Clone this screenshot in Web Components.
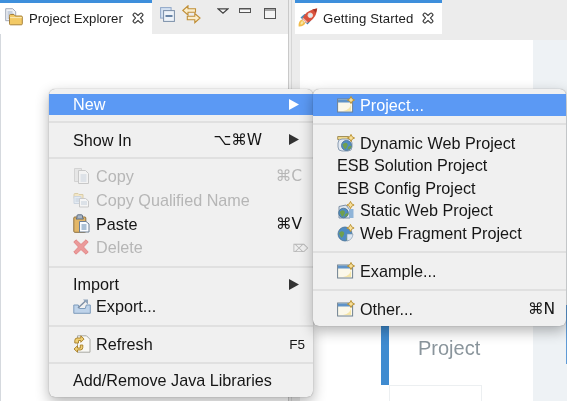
<!DOCTYPE html>
<html><head><meta charset="utf-8">
<style>
html,body{margin:0;padding:0;background:#ececec;overflow:hidden}
body{width:567px;height:401px;font-family:"Liberation Sans",Arial,sans-serif}
</style></head><body>
<ide-app>
  <ide-pane width="288" slot="left">
    <ide-tab icon="explorer" w="152">Project Explorer</ide-tab>
    <ide-toolbar slot="bar"></ide-toolbar>
  </ide-pane>
  <ide-sash slot="sash"></ide-sash>
  <ide-pane slot="right" editor>
    <ide-tab icon="rocket" w="147">Getting Started</ide-tab>
    <start-page slot="body"></start-page>
  </ide-pane>
  <ctx-menu slot="overlay" style="left:49px;top:89px;width:264px;z-index:1;--pad-b:5px">
    <m-item active arrow style="--row-h:21px">New</m-item>
    <m-sep h="14"></m-sep>
    <m-item arrow>Show In<span slot="key">⌥⌘W</span></m-item>
    <m-sep h="14"></m-sep>
    <m-item disabled icon="copy" style="--row-h:23.7px">Copy<span slot="key">⌘C</span></m-item>
    <m-item disabled icon="copyq" style="--row-h:23.7px">Copy Qualified Name</m-item>
    <m-item icon="paste" style="--row-h:23.7px">Paste<span slot="key">⌘V</span></m-item>
    <m-item disabled icon="delete" style="--row-h:23.7px">Delete<span slot="key" style="font-size:11px;margin-right:-6px;margin-top:2px">⌦</span></m-item>
    <m-sep h="14"></m-sep>
    <m-item arrow>Import</m-item>
    <m-item icon="export">Export...</m-item>
    <m-sep h="16"></m-sep>
    <m-item icon="refresh">Refresh<span slot="key" style="font:13.5px 'Liberation Sans',sans-serif;margin-right:-3px">F5</span></m-item>
    <m-sep h="14"></m-sep>
    <m-item>Add/Remove Java Libraries</m-item>
  </ctx-menu>
  <ctx-menu slot="overlay" style="left:313px;top:89px;width:253px;z-index:2;--pad-b:6px">
    <m-item active icon="wizard">Project...</m-item>
    <m-sep h="16"></m-sep>
    <m-item icon="dynweb" style="--row-h:22.5px">Dynamic Web Project</m-item>
    <m-item style="--row-h:22.5px">ESB Solution Project</m-item>
    <m-item style="--row-h:22.5px">ESB Config Project</m-item>
    <m-item icon="staticweb" style="--row-h:22.5px">Static Web Project</m-item>
    <m-item icon="webfrag" style="--row-h:22.5px">Web Fragment Project</m-item>
    <m-sep h="15.5"></m-sep>
    <m-item icon="wizard">Example...</m-item>
    <m-sep h="16"></m-sep>
    <m-item icon="wizard">Other...<span slot="key">⌘N</span></m-item>
  </ctx-menu>
</ide-app>
<script>
const star=(x,y)=>`<path d="M${x} ${y-3.6}l1.2 2.4 2.4 1.2-2.4 1.2-1.2 2.4-1.2-2.4-2.4-1.2 2.4-1.2z" fill="#f7df9a" stroke="#b98f2e" stroke-width=".9"/>`;
const globe=(x,y,r)=>`<circle cx="${x}" cy="${y}" r="${r}" fill="#4f8cc4" stroke="#49708f" stroke-width=".8"/><path d="M${x-r+1} ${y-1}q2-2.5 4-1.5t1 3-2 3-3-4.5zM${x+1} ${y+r-1}q0-3 2-3.5t2 .5q-1 3-4 3z" fill="#6f9f4f"/>`;
const ICONS={
 explorer:`<svg width="18" height="18" viewBox="0 0 18 18"><path d="M.7.7h7l3 3v9H.7z" fill="#eef1f6" stroke="#a3aab8"/><path d="M2.5 4h5M2.5 6h6M2.5 8h6M2.500 10h6" stroke="#a3b0c4"/><path d="M4.500 8.500V15.800a1 1 0 0 0 1 1h10.800a1 1 0 0 0 1-1V9a1 1 0 0 0-1-1h-6l-1.300-1.500H5.500a1 1 0 0 0-1 1z" fill="#f3ca66" stroke="#a8823a"/><path d="M5.100 9.600h11.700" stroke="#fbeab8"/></svg>`,
 rocket:`<svg width="20" height="19" viewBox="0 0 20 19"><path d="M.6 18.400c-.4-3.600 1-6 3.200-7l3.600 3.600c-1 2.300-3.400 3.700-6.800 3.400z" fill="#f2bd4c"/><path d="M2.500 16.600c-.2-1.800.5-3.100 1.800-3.700l1.300 1.300c-.5 1.300-1.500 2.300-3.100 2.400z" fill="#f8e6a4"/><path d="M2.500 9.500l4-3.500h2l-3.500 6z" fill="#4a8fbb"/><path d="M9.500 16.500l3.500-4v-2l-6 3.500z" fill="#3f7fa8"/><path d="M4.300 11C6 6 11 1.500 19.200.4 18.500 8.500 14 13 8.600 15z" fill="#d9523d"/><path d="M14 1.500c1.500.5 3 2 3.700 3.500l1.500-4.600z" fill="#a93528"/><circle cx="12.300" cy="7.300" r="2.300" fill="#dceaf2" stroke="#f5d9d0"/><path d="M4.300 11l4.300 4 1.400-.7-5-4.700z" fill="#f0b7a8"/></svg>`,
 close:`<svg width="12" height="12" viewBox="0 0 12 12"><path d="M1.200 2.400 2.400 1.200a.7.700 0 0 1 1 0L6 3.500l2.600-2.300a.7.700 0 0 1 1 0l1.200 1.200a.7.700 0 0 1 0 1L8.500 6l2.300 2.600a.7.700 0 0 1 0 1l-1.200 1.200a.7.700 0 0 1-1 0L6 8.500l-2.600 2.300a.7.700 0 0 1-1 0L1.200 9.600a.7.700 0 0 1 0-1L3.500 6 1.200 3.400a.7.700 0 0 1 0-1z" fill="#fff" stroke="#333" stroke-width="1.100"/></svg>`,
 collapse:`<svg width="15" height="15" viewBox="0 0 15 15"><rect x=".6" y=".6" width="10.500" height="10.500" fill="#d4e1f1" stroke="#8fa7c8"/><rect x="3.600" y="3.600" width="10.800" height="10.800" fill="#eef3f9" stroke="#7a8ea8"/><path d="M5.500 9h7" stroke="#3b5f8a" stroke-width="1.500"/></svg>`,
 link:`<svg width="19" height="19" viewBox="0 0 19 19"><path d="M.8 5.500 6 .8v2.900h7.500v3.500H6V10z" fill="#fbeecb" stroke="#c08f37" stroke-width="1.100"/><path d="M18 13 12.800 17.700v-2.900H5.300v-3.500h7.500V8.500z" fill="#fbeecb" stroke="#c08f37" stroke-width="1.100"/></svg>`,
 viewmenu:`<svg width="12" height="6" viewBox="0 0 12 6"><path d="M1 .8h10L6 5.200z" fill="#f4f4f4" stroke="#444" stroke-width="1.200"/></svg>`,
 minimize:`<svg width="12" height="5" viewBox="0 0 12 5"><rect x=".5" y=".5" width="11" height="4" fill="#f7f7f7" stroke="#555"/><path d="M1 1h10" stroke="#555"/></svg>`,
 maximize:`<svg width="12" height="11" viewBox="0 0 12 11"><rect x=".5" y=".5" width="11" height="10" fill="#f4f4f4" stroke="#555"/><path d="M1 2h10" stroke="#555"/></svg>`,
 copy:`<svg width="18" height="18" viewBox="0 0 18 18"><path d="M1.500 1.500h7v13h-7z" fill="#e6e6e6" stroke="#d3d3d3"/><path d="M5.500 3.500h7l3 3v10h-10z" fill="#f3f3f3" stroke="#c8c8c8"/><path d="M7.500 8h6M7.500 10h6M7.500 12h6M7.500 14h6" stroke="#c9d2dd"/></svg>`,
 copyq:`<svg width="18" height="18" viewBox="0 0 18 18"><path d="M1 3.500a1 1 0 0 1 1-1h3l1 1h4v4H1z" fill="#f3e6c6" stroke="#d9cda9"/><path d="M1 5.500h7v7H1z" fill="#e3eaf2" stroke="#ccd5e0"/><path d="M6.500 7.500h6l3 2.500v6h-9z" fill="#f5f5f5" stroke="#c9c9c9"/><path d="M8 11h6M8 13h6" stroke="#c3ceda"/><path d="M2.500 8h4M2.500 10h4" stroke="#c3ceda"/></svg>`,
 paste:`<svg width="17" height="19" viewBox="0 0 17 19"><rect x=".8" y="3" width="12" height="15.300" rx="1" fill="#e3b768" stroke="#8d7140"/><path d="M4 3.500V1.800a1 1 0 0 1 1-1h3.500a1 1 0 0 1 1 1V3.500l1 1.500H3z" fill="#a8b5c4" stroke="#5e6e82"/><path d="M6.500 7.500h6.500l3 2.500v8H6.500z" fill="#fafcff" stroke="#6f8094"/><path d="M8.500 11h5M8.500 13h5M8.500 15h5" stroke="#5e86ad"/></svg>`,
 delete:`<svg width="16" height="16" viewBox="0 0 16 16"><path d="M3 .8 8 5.500 13 .8 15.200 3 10.500 8l4.700 5-2.200 2.200L8 10.500l-5 4.700L.8 13l4.700-5L.8 3z" fill="#eb9a9a" stroke="#e28787" stroke-linejoin="round"/></svg>`,
 export:`<svg width="18" height="16" viewBox="0 0 18 16"><path d="M.8 7h4.500l1 3.500h6l1-3.500h4v8.300H.8z" fill="#bed3ea" stroke="#7d9bbb"/><path d="M5 10 12.500 3" stroke="#7d8ea4" stroke-width="1.400"/><path d="M10 1.500h5v5z" fill="#8ea3bb"/></svg>`,
 refresh:`<svg width="18" height="18" viewBox="0 0 18 18"><path d="M4.500.8h9l3.500 3.500v12.900H4.500z" fill="#f8f8f5" stroke="#a9a9a2"/><path d="M1.800 8V5.500q0-2.500 2.500-2.500h3.500V.8l3.300 3.200-3.300 3.300V5.500H5.500v2.500z" fill="#efcf74" stroke="#a67d25" stroke-width=".9"/><path d="M9.800 10v2.500q0 2.500-2.500 2.500H4.500v2.200L1 14l3.500-3.300V13h2.800v-3z" fill="#efcf74" stroke="#a67d25" stroke-width=".9"/></svg>`,
 wizard:`<svg width="18" height="17" viewBox="0 0 18 17"><rect x=".6" y="3" width="15" height="13" fill="#fbf8ea" stroke="#6f8190"/><path d="M1 3.500h14.200v3H1z" fill="#5f93c8"/><path d="M14 7c0 4-2.500 7-8 8h8z" fill="#f6e6a8"/>${star(14,4)}</svg>`,
 dynweb:`<svg width="18" height="18" viewBox="0 0 18 18"><path d="M.7 2.500h11v3H.7z" fill="#efd88a" stroke="#a3905a"/><path d="M2 5.500h8" stroke="#ccc"/><rect x="1" y="5" width="14" height="12" rx="4" fill="#e3e9f1" stroke="#8a9db3"/>${globe(9.500,11.500,5)}${star(14,4)}</svg>`,
 staticweb:`<svg width="18" height="18" viewBox="0 0 18 18"><path d="M2 5.500 9 4l4 5v8H2z" fill="#dfe6ee" stroke="#7d90a6"/><rect x="12" y="8" width="4.500" height="9" fill="#8fb4d8"/>${globe(6.500,12,4.800)}${star(13.500,4)}</svg>`,
 webfrag:`<svg width="18" height="18" viewBox="0 0 18 18">${globe(8,10,7)}<path d="M10 10h6q-.5 6-6 7z" fill="#dbe6f2" stroke="#7e93aa" stroke-width=".6"/>${star(13.500,4)}</svg>`
};
class Base extends HTMLElement{
  constructor(){super();this.attachShadow({mode:"open"});}
  render(h){this.shadowRoot.innerHTML=h;}
}
class IdeIcon extends Base{connectedCallback(){
  this.render(`<style>:host{display:inline-flex;line-height:0}</style>${ICONS[this.getAttribute("name")]||""}`);
}}
class IdeApp extends Base{connectedCallback(){this.render(`<style>
  :host{display:grid;grid-template-columns:288px 7px 1fr;width:567px;height:401px;position:relative;overflow:hidden;background:#ececec;filter:blur(.3px)}
  ::slotted(ctx-menu){position:absolute}
  </style><slot name="left"></slot><slot name="sash"></slot><slot name="right"></slot><slot name="overlay"></slot>`);}}
class IdeSash extends Base{connectedCallback(){this.render(`<style>
  :host{display:block;background:#ececec;border-left:1px solid #c9c9c9;box-sizing:border-box;position:relative}
  i{display:block;width:1px;height:100%;background:#d6d6d6;margin-left:2px}
  </style><i></i>`);}}
class IdePane extends Base{connectedCallback(){
  const ed=this.hasAttribute("editor");
  this.render(`<style>
  :host{display:flex;flex-direction:column;min-width:0;height:401px;background:${ed?"#ececec":"#fff"};${ed?"":"border-left:1px solid #d5d9de;box-sizing:border-box;"}}
  .bar{display:flex;height:34px;flex:none;${ed?"":"margin-left:-1px;"}}
  .bar ::slotted(ide-toolbar){flex:1}
  .body{flex:1;min-height:0;display:flex;${ed?"padding:6px 0 0 5px":""}}
  .body ::slotted(*){flex:1}
  </style><div class="bar"><slot></slot><slot name="bar"></slot></div><div class="body"><slot name="body"></slot></div>`);
}}
class IdeTab extends Base{connectedCallback(){
  const w=this.getAttribute("w"),ic=this.getAttribute("icon"),r=ic==="rocket";
  this.render(`<style>
  :host{display:flex;flex:none;width:${w}px;box-sizing:border-box;background:#fff;border-top:3px solid #3e8fdc;align-items:center;font:13.2px "Liberation Sans",Arial,sans-serif;color:#1d1d1d;height:34px}
  .i{width:28px;display:flex;justify-content:flex-end;padding-right:5px;box-sizing:border-box;flex:none;margin-top:-3px}
  .t{flex:1;white-space:nowrap;margin-top:-1px;margin-left:${r?"0":"1px"};letter-spacing:${r?".12px":"0"}}
  .x{flex:none;margin-right:8px;display:flex;margin-top:-1px}
  </style><div class="i"><ide-icon name="${ic}"></ide-icon></div><div class="t"><slot></slot></div><div class="x"><ide-icon name="close"></ide-icon></div>`);
}}
class IdeToolbar extends Base{connectedCallback(){this.render(`<style>
  :host{display:flex;background:#ececec;align-items:flex-start;height:34px}
  ide-icon{flex:none}
  .a{margin:7px 0 0 8px}.b{margin:5px 0 0 7px}.c{margin:8px 0 0 16px}.d{margin:8px 0 0 10px}.e{margin:8px 0 0 13px}
  </style>
  <ide-icon class="a" name="collapse"></ide-icon><ide-icon class="b" name="link"></ide-icon><ide-icon class="c" name="viewmenu"></ide-icon><ide-icon class="d" name="minimize"></ide-icon><ide-icon class="e" name="maximize"></ide-icon>`);}}
class StartPage extends Base{connectedCallback(){this.render(`<style>
  :host{display:grid;grid-template-columns:1fr 34px;grid-template-rows:1fr;background:#fff;font-family:"Liberation Sans",Arial,sans-serif}
  .main{display:flex;flex-direction:column;padding:267px 0 0 81px;min-width:0}
  .card{display:flex;height:78px;flex:none}
  .bar{width:8px;background:#3f8bd0;flex:none}
  .txt{width:144px;padding:0 0 0 29px;box-sizing:border-box;font-size:20px;line-height:24px;color:#8a959c;font-weight:300}
  .txt div:first-child{margin-bottom:5px}
  .next{margin-left:8px;width:93px;height:40px;box-sizing:border-box;border:1px solid #eceff1;border-bottom:0;background:#fff}
  .side{background:#eef2f5;position:relative;display:flex;justify-content:flex-end;align-items:flex-start;padding-top:265px}
  .side i{display:block;width:1px;height:59px;background:#5f9bd6}
  </style><div class="main"><div class="card"><div class="bar"></div><div class="txt"><div>ESB</div><div>Project</div></div></div><div class="next"></div></div><div class="side"><i></i></div>`);}}
class CtxMenu extends Base{connectedCallback(){this.render(`<style>
  :host{display:flex;flex-direction:column;box-sizing:border-box;padding:5px 0 var(--pad-b,5px);background:#f0f0f0;border-radius:6px;box-shadow:0 0 1px rgba(0,0,0,.45),0 5px 14px rgba(0,0,0,.3);font:16.2px "Liberation Sans",Arial,sans-serif;color:#161616}
  </style><slot></slot>`);}}
class MSep extends Base{connectedCallback(){const h=this.getAttribute("h");this.render(`<style>
  :host{display:flex;align-items:center;height:${h}px;flex:none}
  i{display:block;width:100%;height:2px;background:#e0e0e0}
  </style><i></i>`);}}
class MItem extends Base{connectedCallback(){
  const ic=this.getAttribute("icon"),ar=this.hasAttribute("arrow");
  this.render(`<style>
  :host{display:flex;align-items:center;height:var(--row-h,22px);flex:none;box-sizing:border-box;padding:0 11px 1px 24px;white-space:nowrap}
  :host([active]){background:#5b99f4;color:#fff}
  :host([disabled]){color:#b6b6b6}
  .i{width:23px;flex:none;display:flex;align-items:center}
  .l{flex:1;position:relative;top:.5px}
  .k{font-family:"DejaVu Sans","Liberation Sans",sans-serif;font-size:15.5px;display:block}
  ::slotted([slot=key]){display:inline-block}
  svg.a{flex:none;margin-left:27px;margin-right:3px}
  </style>${ic?`<div class="i"><ide-icon name="${ic}"></ide-icon></div>`:""}<div class="l"><slot></slot></div><span class="k"><slot name="key"></slot></span>${ar?`<svg class="a" width="10" height="11" viewBox="0 0 10 11"><path d="M0 0 10 5.500 0 11z" fill="${this.hasAttribute("active")?"#fff":"#333"}"/></svg>`:""}`);
}}
customElements.define("ide-icon",IdeIcon);
customElements.define("ide-app",IdeApp);
customElements.define("ide-sash",IdeSash);
customElements.define("ide-pane",IdePane);
customElements.define("ide-tab",IdeTab);
customElements.define("ide-toolbar",IdeToolbar);
customElements.define("start-page",StartPage);
customElements.define("ctx-menu",CtxMenu);
customElements.define("m-sep",MSep);
customElements.define("m-item",MItem);
</script>
</body></html>
